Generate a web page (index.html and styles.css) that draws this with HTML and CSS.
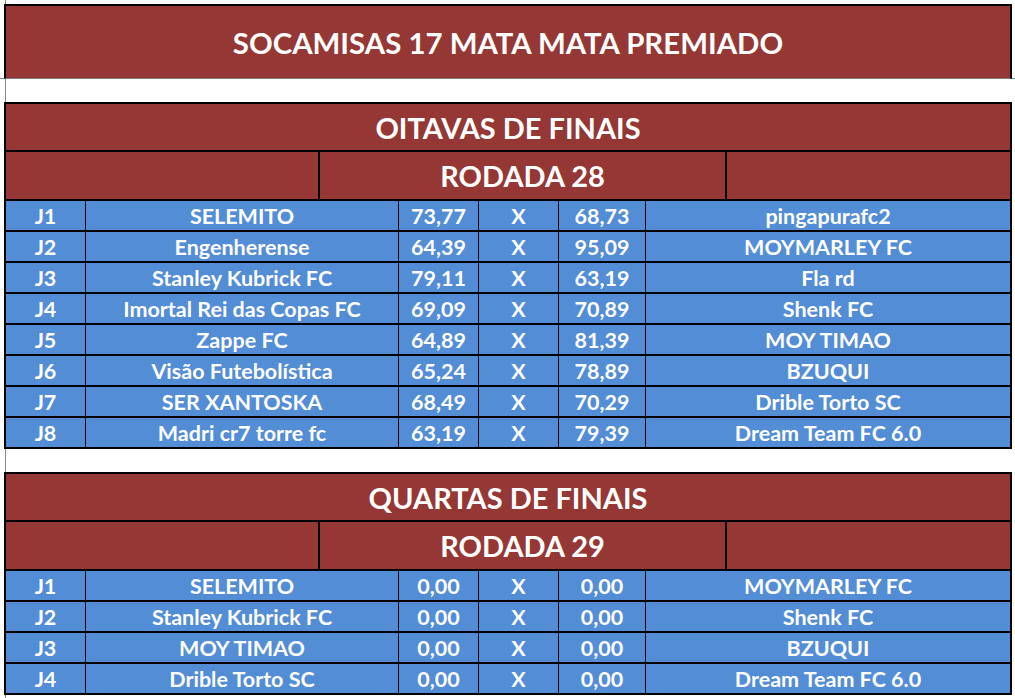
FILE: index.html
```html
<!DOCTYPE html>
<html lang="pt">
<head>
<meta charset="utf-8">
<title>SOCAMISAS 17 MATA MATA PREMIADO</title>
<link rel="stylesheet" href="styles.css">
</head>
<body>
<div class="title">SOCAMISAS 17 MATA MATA PREMIADO</div>

<section class="phase phase-8">
  <div class="phase-head">OITAVAS DE FINAIS</div>
  <div class="round">
    <div class="round-cell"></div>
    <div class="round-cell round-name">RODADA 28</div>
    <div class="round-cell"></div>
  </div>
  <div class="rows">
    <div class="c">J1</div><div class="c">SELEMITO</div><div class="c">73,77</div><div class="c">X</div><div class="c">68,73</div><div class="c">pingapurafc2</div>
    <div class="c">J2</div><div class="c">Engenherense</div><div class="c">64,39</div><div class="c">X</div><div class="c">95,09</div><div class="c">MOYMARLEY FC</div>
    <div class="c">J3</div><div class="c">Stanley Kubrick FC</div><div class="c">79,11</div><div class="c">X</div><div class="c">63,19</div><div class="c">Fla rd</div>
    <div class="c">J4</div><div class="c">Imortal Rei das Copas FC</div><div class="c">69,09</div><div class="c">X</div><div class="c">70,89</div><div class="c">Shenk FC</div>
    <div class="c">J5</div><div class="c">Zappe FC</div><div class="c">64,89</div><div class="c">X</div><div class="c">81,39</div><div class="c">MOY TIMAO</div>
    <div class="c">J6</div><div class="c">Visão Futebolística</div><div class="c">65,24</div><div class="c">X</div><div class="c">78,89</div><div class="c">BZUQUI</div>
    <div class="c">J7</div><div class="c">SER XANTOSKA</div><div class="c">68,49</div><div class="c">X</div><div class="c">70,29</div><div class="c">Drible Torto SC</div>
    <div class="c">J8</div><div class="c">Madri cr7 torre fc</div><div class="c">63,19</div><div class="c">X</div><div class="c">79,39</div><div class="c">Dream Team FC 6.0</div>
  </div>
</section>

<section class="phase phase-4">
  <div class="phase-head">QUARTAS DE FINAIS</div>
  <div class="round">
    <div class="round-cell"></div>
    <div class="round-cell round-name">RODADA 29</div>
    <div class="round-cell"></div>
  </div>
  <div class="rows">
    <div class="c">J1</div><div class="c">SELEMITO</div><div class="c">0,00</div><div class="c">X</div><div class="c">0,00</div><div class="c">MOYMARLEY FC</div>
    <div class="c">J2</div><div class="c">Stanley Kubrick FC</div><div class="c">0,00</div><div class="c">X</div><div class="c">0,00</div><div class="c">Shenk FC</div>
    <div class="c">J3</div><div class="c">MOY TIMAO</div><div class="c">0,00</div><div class="c">X</div><div class="c">0,00</div><div class="c">BZUQUI</div>
    <div class="c">J4</div><div class="c">Drible Torto SC</div><div class="c">0,00</div><div class="c">X</div><div class="c">0,00</div><div class="c">Dream Team FC 6.0</div>
  </div>
</section>
</body>
</html>
```

FILE: styles.css
```css
html, body {
  margin: 0;
  padding: 0;
}
body {
  width: 1015px;
  height: 698px;
  overflow: hidden;
  font-family: Lato, "Liberation Sans", sans-serif;
  font-weight: 700;
  color: #ffffff;
  background:
    linear-gradient(#8a8a8a, #8a8a8a) no-repeat 5px 0 / 1px 100%,
    linear-gradient(#8a8a8a, #8a8a8a) no-repeat 0 78px / 100% 1px,
    #ffffff;
}
.title {
  margin: 4px 0 0 4px;
  width: 1004px;
  height: 72px;
  border: 2px solid #000;
  border-bottom: 1px solid #7f7f7f;
  background: #953735;
  display: flex;
  align-items: center;
  justify-content: center;
  font-size: 29.4px;
}
.phase {
  margin: 23px 0 0 4px;
  width: 1004px;
  border: 2px solid #000;
  background: #000;
  display: flex;
  flex-direction: column;
  gap: 2px;
}
.phase-head {
  height: 46px;
  background: #953735;
  display: flex;
  align-items: center;
  justify-content: center;
  font-size: 29px;
}
.round {
  height: 47px;
  display: grid;
  grid-template-columns: 312px 405px 283px;
  column-gap: 2px;
}
.round-cell {
  background: #953735;
}
.round-name {
  display: flex;
  align-items: center;
  justify-content: center;
  font-size: 29px;
}
.rows {
  display: grid;
  grid-template-columns: 79px 312px 79px 79px 86px 364px;
  grid-auto-rows: 29px;
  column-gap: 1px;
  row-gap: 2px;
}
.c {
  background: #538dd5;
  display: flex;
  align-items: center;
  justify-content: center;
  font-size: 21.5px;
  white-space: nowrap;
}
```
